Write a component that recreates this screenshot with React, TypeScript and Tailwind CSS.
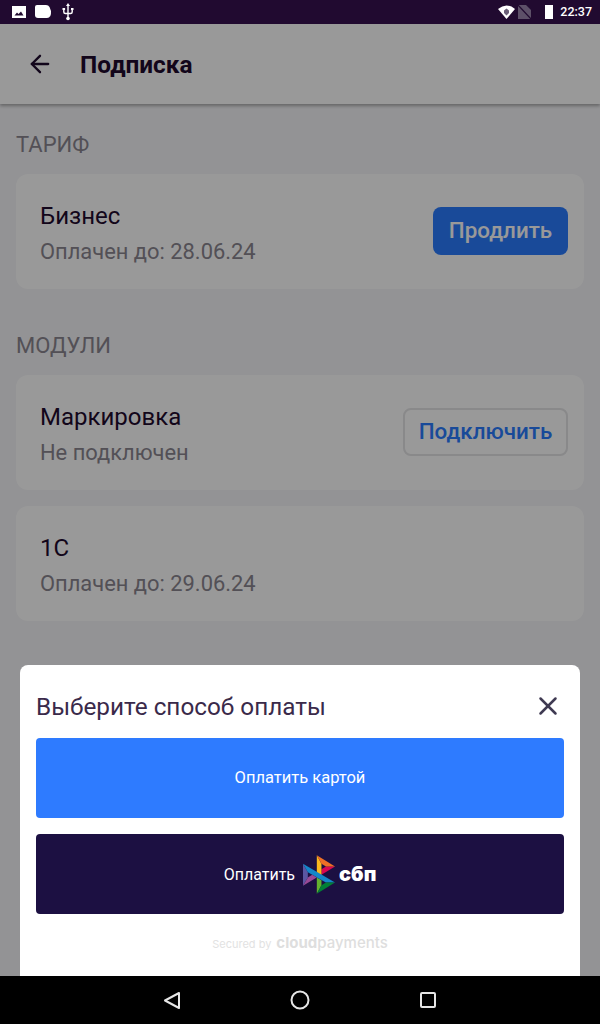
import { ArrowLeft, X } from "lucide-react";

const font = { fontFamily: "Roboto, sans-serif" };

function Card({ title, sub, action }: { title: string; sub: string; action?: React.ReactNode }) {
  return (
    <div className="flex h-[115px] items-center justify-between rounded-xl bg-white pl-6 pr-4">
      <div className="pt-[5px]">
        <div className="text-[24px] leading-[30px] text-[#1f0a2e]">{title}</div>
        <div className="mt-[6px] text-[21.9px] leading-[30px] text-[#8a8690]">{sub}</div>
      </div>
      {action}
    </div>
  );
}

function SbpLogo() {
  return (
    <svg width="32" height="39" viewBox="0 0 32.4 39" className="block">
      <path d="M0 8.6 L4.9 17.2 V22.5 L0 31 Z" fill="#5b57a2" />
      <path d="M18.7 14.1 L23.2 11.3 H32.4 L18.7 19.7 Z" fill="#d90751" />
      <path d="M14 0 L18.7 8.5 V19.7 L14 22.5 Z" fill="#fab81c" />
      <path d="M32.4 11.3 H23.2 L18.7 8.5 L14 0 Z" fill="#ed6f26" />
      <path d="M18.7 30.5 L14 39 V22.5 L18.7 25.3 Z" fill="#63b22f" />
      <path d="M23.2 27.7 L4.9 17.2 L0 8.6 L32.4 27.7 Z" fill="#1487c9" />
      <path d="M14 39 L18.7 30.5 L23.2 27.7 H32.4 Z" fill="#017f36" />
      <path d="M0 31 L13.9 22.5 L9.3 19.7 L4.9 22.5 Z" fill="#984995" />
    </svg>
  );
}

export default function App() {
  return (
    <div className="relative flex h-[1024px] w-[600px] flex-col overflow-hidden bg-[#f5f5f8]" style={font}>
      <div className="z-20 flex h-6 shrink-0 items-center justify-between bg-[#210a30] pl-[11px] pr-2 text-white">
        <div className="flex items-center gap-[7px]">
          <svg width="16" height="16" viewBox="0 0 16 16">
            <path d="M1 2 H15 V14 H1 Z" fill="#fff" />
            <path d="M3.5 11.5 L6 8.5 L7.5 10 L10 7.5 L12.5 11.5 Z" fill="#210a30" />
          </svg>
          <svg width="18" height="16" viewBox="0 0 18 16">
            <path d="M3 1 H12 Q14.5 1 15.5 3 L17 7 Q17.5 14 13 14 H4 Q1 14 1 11 V3 Q1 1 3 1 Z" fill="#fff" />
          </svg>
          <svg width="12" height="18" viewBox="0 0 12 18" className="ml-[3px]">
            <path d="M6 2 V15 M1.8 6.5 V9 Q1.8 10.5 3.5 10.5 H8.5 Q10.2 10.5 10.2 9 V6.5" fill="none" stroke="#fff" strokeWidth="1.4" />
            <path d="M6 0 L8 3 H4 Z M0.5 5 H3.1 V7 H0.5 Z M9 5 H11.5 V7 H9 Z" fill="#fff" />
            <circle cx="6" cy="15.5" r="1.8" fill="#fff" />
          </svg>
        </div>
        <div className="flex items-center">
          <svg width="17" height="14" viewBox="0 0 17 14">
            <path d="M0 4 Q8.5 -3 17 4 L8.5 14 Z" fill="#fff" />
            <path d="M8.5 3.5 L11 5.5 V8 L8.5 10.5 L6 8 V5.5 Z" fill="#6b5f78" />
          </svg>
          <svg width="13" height="14" viewBox="0 0 13 14" className="ml-[3px]">
            <path d="M0 0 H8 L13 5 V14 H0 Z" fill="#5d5068" />
            <path d="M0 0 L13 14" stroke="#210a30" strokeWidth="1.2" />
          </svg>
          <div className="ml-[14px] h-[14px] w-[8px] bg-white" />
          <span className="ml-[7px] text-[12.5px] font-medium">22:37</span>
        </div>
      </div>

      <div className="flex h-20 shrink-0 items-center bg-white pl-[26px] shadow-[0_2px_3px_rgba(0,0,0,0.3)]">
        <ArrowLeft size={28} strokeWidth={2} className="text-[#1f0a2e]" />
        <h1 className="ml-[26px] pt-[2px] text-[24.4px] font-bold text-[#1f0a2e]">Подписка</h1>
      </div>

      <div className="flex flex-col px-4">
        <div className="mt-[26px] text-[22px] leading-[30px] text-[#8a8690]">ТАРИФ</div>
        <div className="mt-[14px]">
          <Card
            title="Бизнес"
            sub="Оплачен до: 28.06.24"
            action={
              <button className="mb-[2px] flex h-12 w-[135px] items-center justify-center rounded-lg bg-[#2b7cff] text-[22.4px] font-medium text-white">
                Продлить
              </button>
            }
          />
        </div>
        <div className="mt-[42px] text-[22px] leading-[30px] text-[#8a8690]">МОДУЛИ</div>
        <div className="mt-[14px]">
          <Card
            title="Маркировка"
            sub="Не подключен"
            action={
              <button className="mb-[2px] flex h-12 w-[165px] items-center justify-center rounded-lg border-2 border-[#e4e4e6] text-[22.4px] font-medium text-[#2b7cff]">
                Подключить
              </button>
            }
          />
        </div>
        <div className="mt-4">
          <Card title="1С" sub="Оплачен до: 29.06.24" />
        </div>
      </div>

      <div className="absolute inset-0 z-10 bg-black/40" />

      <div className="absolute bottom-12 left-5 right-5 z-10 h-[311px] rounded-t-lg bg-white px-4">
        <div className="flex h-[73px] items-center justify-between pt-[10px]">
          <span className="pt-[2px] text-[24.3px] text-[#3a2a4a]">Выберите способ оплаты</span>
          <X size={30} strokeWidth={2} className="mb-[2px] mr-[1px] text-[#3f3a52]" />
        </div>
        <button className="flex h-20 w-full items-center justify-center rounded bg-[#2e7bff] text-[16.5px] text-white">
          Оплатить картой
        </button>
        <button className="mt-4 flex h-20 w-full items-center justify-center rounded bg-[#1c1042] text-[16px] text-white">
          <span className="pt-[2px]">Оплатить</span>
          <span className="ml-2">
            <SbpLogo />
          </span>
          <span className="ml-1 text-[20px] font-black" style={{ fontFamily: "Inter, sans-serif" }}>
            сбп
          </span>
        </button>
        <div
          className="mt-[18px] flex items-baseline justify-center gap-[5px]"
          style={{ fontFamily: "Inter, sans-serif" }}
        >
          <span className="text-[11px] text-[#e2e2e2]">Secured by</span>
          <span className="text-[15px] font-bold text-[#dedede]">
            cloud<span className="font-medium">payments</span>
          </span>
        </div>
      </div>

      <div className="absolute bottom-0 left-0 right-0 z-20 flex h-12 items-center bg-black">
        <svg width="600" height="48" viewBox="0 0 600 48" fill="none" stroke="#e6e6e6" strokeWidth="2">
          <path d="M179 17 L165 24.5 L179 32 Z" strokeLinejoin="round" />
          <circle cx="300" cy="24" r="8.5" />
          <rect x="421" y="17" width="14" height="14" rx="1" />
        </svg>
      </div>
    </div>
  );
}
